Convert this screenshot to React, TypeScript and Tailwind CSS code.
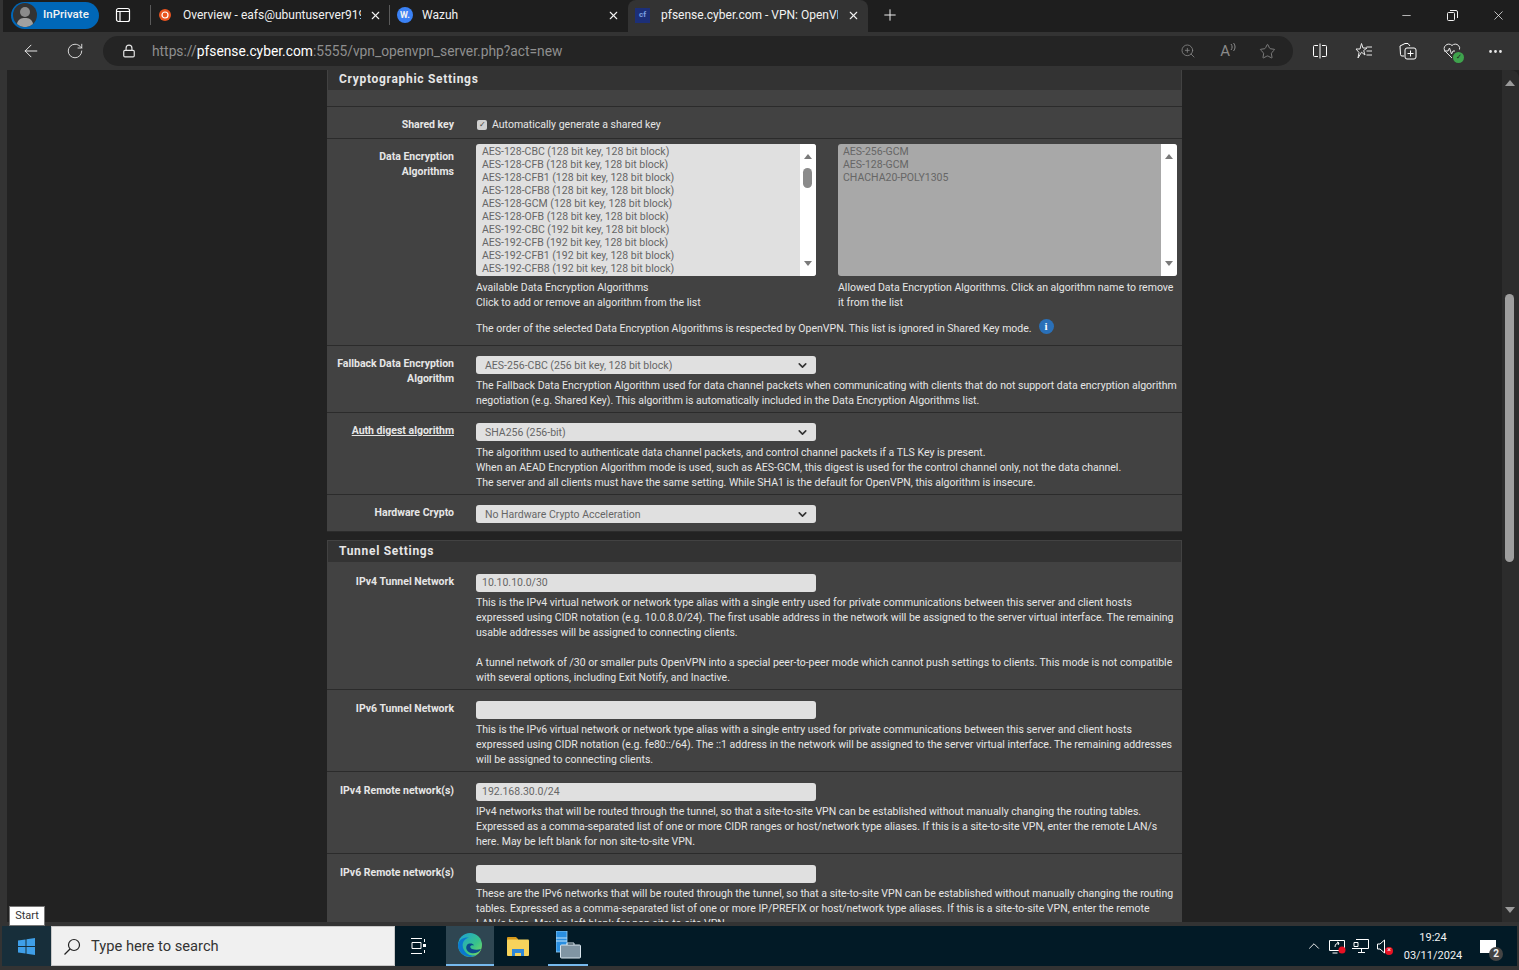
import { ReactNode } from "react";
import { ArrowLeft, ChevronDown, ChevronUp, Lock, Minus, MoreHorizontal, Plus, RotateCw, Star, X, ZoomIn } from "lucide-react";

const available = [
  "AES-128-CBC (128 bit key, 128 bit block)",
  "AES-128-CFB (128 bit key, 128 bit block)",
  "AES-128-CFB1 (128 bit key, 128 bit block)",
  "AES-128-CFB8 (128 bit key, 128 bit block)",
  "AES-128-GCM (128 bit key, 128 bit block)",
  "AES-128-OFB (128 bit key, 128 bit block)",
  "AES-192-CBC (192 bit key, 128 bit block)",
  "AES-192-CFB (192 bit key, 128 bit block)",
  "AES-192-CFB1 (192 bit key, 128 bit block)",
  "AES-192-CFB8 (192 bit key, 128 bit block)",
];

function TitleBar() {
  return (
    <div className="flex h-8 shrink-0 items-center border-l-[3px] border-[#333333] bg-[#1e1e1e] text-xs text-[#f2f2f2]">
      <div className="ml-[8px] -mt-[2px] flex h-[27px] w-[88px] items-center rounded-full bg-[#0067b8] pl-[2px]">
        <svg width="24" height="24" viewBox="0 0 24 24">
          <circle cx="12" cy="12" r="12" fill="#333333" />
          <circle cx="12" cy="9" r="5" fill="#8c8c8c" />
          <path d="M4 21c1-5 4-6 8-6s7 1 8 6a12 12 0 0 1-16 0z" fill="#a0a0a0" />
        </svg>
        <span className="ml-[6px] text-[11.5px] font-medium">InPrivate</span>
      </div>
      <svg width="16" height="16" viewBox="0 0 16 16" className="ml-[16px] -mt-[2px]" fill="none" stroke="white" strokeWidth="1.2">
        <rect x="1.5" y="1.5" width="13" height="13" rx="2" />
        <path d="M1.5 4.5h13M5 4.5v10" />
      </svg>
      <div className="ml-[19px] -mt-[2px] h-5 w-px bg-[#5a5a5a]" />
      <div className="flex h-8 w-[238px] items-center pb-[2px] pl-2">
        <svg width="12" height="12" viewBox="0 0 12 12" className="shrink-0">
          <circle cx="6" cy="6" r="6" fill="#e95420" />
          <circle cx="6" cy="6" r="3" fill="none" stroke="white" strokeWidth="1.2" />
        </svg>
        <span className="ml-[12px] w-[178px] overflow-hidden whitespace-nowrap">Overview - eafs@ubuntuserver919</span>
        <X size={13} className="ml-[8px] shrink-0" />
      </div>
      <div className="-mt-[2px] h-5 w-px bg-[#5a5a5a]" />
      <div className="flex h-8 w-[238px] items-center pb-[2px] pl-[7px]">
        <div className="flex h-4 w-4 items-center justify-center rounded-full bg-[#3b82f6] text-[9px] font-bold">W.</div>
        <span className="ml-[9px] w-[185px]">Wazuh</span>
        <X size={13} />
      </div>
      <div className="flex h-8 w-[240px] items-center rounded-t-lg bg-[#333333] pb-[2px] pl-[7px]">
        <div className="flex h-[15px] w-[15px] items-center justify-center bg-[#1c2f78] text-[8px] font-bold text-[#7aa0e0]">cf</div>
        <span className="ml-[11px] w-[177px] overflow-hidden whitespace-nowrap">pfsense.cyber.com - VPN: OpenVPN</span>
        <X size={13} className="ml-[9px]" />
      </div>
      <Plus size={18} strokeWidth={1.3} className="ml-[13px] -mt-[2px]" />
      <div className="ml-auto -mt-[2px] flex items-center">
        <Minus size={13} strokeWidth={1.3} className="mr-[34px]" />
        <svg width="11" height="11" viewBox="0 0 11 11" fill="none" stroke="#f2f2f2" className="mr-[33px]">
          <rect x="0.5" y="2.5" width="7" height="8" rx="1" />
          <path d="M3 .5h6a1.5 1.5 0 0 1 1.5 1.5v6" />
        </svg>
        <X size={15} strokeWidth={1.2} className="mr-[13px]" />
      </div>
    </div>
  );
}

function AddressBar() {
  return (
    <div className="z-10 flex h-[38px] shrink-0 items-center bg-[#333333] text-[#e8e8e8]">
      <ArrowLeft size={20} strokeWidth={1.2} className="ml-[21px]" />
      <RotateCw size={18} strokeWidth={1.2} className="ml-[25px]" />
      <div className="ml-[19px] flex h-[30px] w-[1190px] items-center rounded-full bg-[#242424]">
        <Lock size={14} className="ml-[19px] text-[#e8e8e8]" />
        <span className="ml-[16px] text-[13.8px] text-[#8f8f8f]">
          https://<span className="text-white">pfsense.cyber.com</span>:5555/vpn_openvpn_server.php?act=new
        </span>
        <div className="ml-auto mr-[17px] flex items-center text-[#8a8a8a]">
          <ZoomIn size={16} strokeWidth={1.2} />
          <span className="ml-[24px] text-[15px] leading-none">A</span>
          <svg width="6" height="10" viewBox="0 0 6 10" fill="none" stroke="#8a8a8a" className="mb-2">
            <path d="M1 2c1.500 2 1.500 4 0 6M3.500 1c2 2.500 2 5.500 0 8" />
          </svg>
          <Star size={17} strokeWidth={1.2} className="ml-[23px]" />
        </div>
      </div>
      <svg width="16" height="16" viewBox="0 0 16 16" className="ml-[19px]" fill="none" stroke="white">
        <path d="M6 2.500H2.500a1 1 0 0 0-1 1v9a1 1 0 0 0 1 1H6M10 2.500h3.500a1 1 0 0 1 1 1v9a1 1 0 0 1-1 1H10M8 .5v15" />
      </svg>
      <svg width="18" height="18" viewBox="0 0 18 18" className="ml-[27px]" fill="none" stroke="#e8e8e8">
        <path d="M6.500 1.500 8 6h4l-3.300 2.500 1.300 4.500-3.500-2.800L3 16l1-5.500L1 7h4z" />
        <path d="M11.500 5H17M11.500 9H17M11.500 13H17" />
      </svg>
      <svg width="18" height="18" viewBox="0 0 18 18" className="ml-[26px]" fill="none" stroke="white">
        <path d="M5 14H3a1.500 1.500 0 0 1-1.500-1.500L1 4l5-2.500h3L11 4" />
        <rect x="6" y="6" width="11" height="11" rx="2" />
        <path d="M11.500 8.500v6M8.500 11.500h6" />
      </svg>
      <div className="relative ml-[26px] h-[18px] w-[18px]">
        <svg width="18" height="18" viewBox="0 0 18 18" fill="none" stroke="#e8e8e8">
          <path d="M9 16 2.500 9.500a4 4 0 0 1 0-6 4.500 4.500 0 0 1 6.500 0 4.500 4.500 0 0 1 6.500 0 4 4 0 0 1 1 4M1 9h4l1.500-3 2 6L10 9h2" />
        </svg>
        <div className="absolute -bottom-[3px] -right-[3px] flex h-[11px] w-[11px] items-center justify-center rounded-full bg-[#3fa34d] text-[7px] leading-none text-[#1e1e1e]">✓</div>
      </div>
      <MoreHorizontal size={17} className="ml-[26px]" />
    </div>
  );
}

function Heading({ children }: { children: ReactNode }) {
  return (
    <div className="flex h-[23px] items-center border border-[#424242] bg-[#333333] pb-[2px] pl-[11px] text-xs font-bold tracking-[0.7px] text-[#e6e6e6]">
      {children}
    </div>
  );
}

function Row({ label, children, underline, className }: { label: ReactNode; children: ReactNode; underline?: boolean; className?: string }) {
  return (
    <div className={`flex border-b border-[#2b2b2b] bg-[#424242] ${className ?? ""}`}>
      <div className="w-[127px] shrink-0 pt-[10px] text-right text-[10.5px] leading-[15px] font-bold text-[#e6e6e6]">
        <span className={underline ? "underline" : ""}>{label}</span>
      </div>
      <div className="ml-[22px] flex-1 pt-[10px] pr-[3px]">{children}</div>
    </div>
  );
}

function Help({ children }: { children: ReactNode }) {
  return <div className="text-[10.5px] leading-[15px] text-[#e6e6e6]">{children}</div>;
}

function Select({ value }: { value: string }) {
  return (
    <div className="flex h-[18px] w-[340px] items-center rounded-[3px] bg-[#e0e0e0] pt-px pr-[7px] pl-[9px] text-[10.5px] text-[#666666]">
      {value}
      <ChevronDown size={13} strokeWidth={3} className="ml-auto text-[#333333]" />
    </div>
  );
}

function TextBox({ value }: { value?: string }) {
  return (
    <div className="flex h-[18px] w-[340px] items-center rounded-[3px] bg-[#e0e0e0] pl-[6px] text-[10.5px] text-[#666666]">{value}</div>
  );
}

function ListBox({ items, width, bg, thumb }: { items: string[]; width: string; bg: string; thumb?: boolean }) {
  return (
    <div className={`flex h-[132px] overflow-hidden rounded-[3px] ${width} ${bg} text-[10.5px] leading-[13px] text-[#666666]`}>
      <div className={`flex-1 pt-px ${thumb ? "pl-[6px]" : "pl-[5px]"}`}>
        {items.map((item) => (
          <div key={item}>{item}</div>
        ))}
      </div>
      <div className="relative w-4 shrink-0 bg-white">
        <div className="absolute left-1 top-[10px] h-0 w-0 border-x-4 border-b-[5px] border-x-transparent border-b-[#7a7a7a]" />
        {thumb && <div className="absolute left-[3px] top-6 h-5 w-[9px] rounded-full bg-[#8a8a8a]" />}
        <div className="absolute bottom-[10px] left-1 h-0 w-0 border-x-4 border-t-[5px] border-x-transparent border-t-[#7a7a7a]" />
      </div>
    </div>
  );
}

function Form() {
  return (
    <div className="-mt-[2px] ml-[320px] w-[855px]">
      <Heading>Cryptographic Settings</Heading>
      <div className="h-[16px] border-b border-[#2b2b2b] bg-[#424242]" />
      <Row label="Shared key" className="h-[32px]">
        <div className="flex items-center text-[10.5px] leading-[15px] text-[#e6e6e6]">
          <div className="ml-px flex h-[10px] w-[10px] items-center justify-center rounded-[2px] bg-[#d0d0d0] text-[8px] leading-none text-[#444444]">✓</div>
          <span className="ml-[5px]">Automatically generate a shared key</span>
        </div>
      </Row>
      <Row label="Data Encryption Algorithms" className="h-[207px] [&>div:last-child]:pt-[5px]">
        <div className="flex">
          <div className="w-[362px]">
            <ListBox items={available} width="w-[340px]" bg="bg-[#e0e0e0]" thumb />
            <div className="mt-1">
              <Help>Available Data Encryption Algorithms<br />Click to add or remove an algorithm from the list</Help>
            </div>
          </div>
          <div className="w-[339px]">
            <ListBox items={["AES-256-GCM", "AES-128-GCM", "CHACHA20-POLY1305"]} width="w-[339px]" bg="bg-[#a8a8a8]" />
            <div className="mt-1">
              <Help>Allowed Data Encryption Algorithms. Click an algorithm name to remove it from the list</Help>
            </div>
          </div>
        </div>
        <div className="mt-[11px] flex items-center">
          <Help>The order of the selected Data Encryption Algorithms is respected by OpenVPN. This list is ignored in Shared Key mode.</Help>
          <div className="-mt-[4px] ml-[7px] flex h-[15px] w-[15px] items-center justify-center rounded-full bg-[#2a70b8] font-['Liberation_Serif',serif] text-[11px] font-bold text-white">i</div>
        </div>
      </Row>
      <Row label="Fallback Data Encryption Algorithm" className="h-[67px]">
        <Select value="AES-256-CBC (256 bit key, 128 bit block)" />
        <div className="mt-[4px]">
          <Help>The Fallback Data Encryption Algorithm used for data channel packets when communicating with clients that do not support data encryption algorithm negotiation (e.g. Shared Key). This algorithm is automatically included in the Data Encryption Algorithms list.</Help>
        </div>
      </Row>
      <Row label="Auth digest algorithm" underline className="h-[82px]">
        <Select value="SHA256 (256-bit)" />
        <div className="mt-[4px]">
          <Help>
            The algorithm used to authenticate data channel packets, and control channel packets if a TLS Key is present.<br />
            When an AEAD Encryption Algorithm mode is used, such as AES-GCM, this digest is used for the control channel only, not the data channel.<br />
            The server and all clients must have the same setting. While SHA1 is the default for OpenVPN, this algorithm is insecure.
          </Help>
        </div>
      </Row>
      <Row label="Hardware Crypto" className="h-[37px]">
        <Select value="No Hardware Crypto Acceleration" />
      </Row>
      <div className="h-2" />
      <Heading>Tunnel Settings</Heading>
      <Row label="IPv4 Tunnel Network" className="h-[127px] [&>div]:pt-[11px]">
        <TextBox value="10.10.10.0/30" />
        <div className="mt-[3px]">
          <Help>
            This is the IPv4 virtual network or network type alias with a single entry used for private communications between this server and client hosts expressed using CIDR notation (e.g. 10.0.8.0/24). The first usable address in the network will be assigned to the server virtual interface. The remaining usable addresses will be assigned to connecting clients.
            <br /><br />
            A tunnel network of /30 or smaller puts OpenVPN into a special peer-to-peer mode which cannot push settings to clients. This mode is not compatible with several options, including Exit Notify, and Inactive.
          </Help>
        </div>
      </Row>
      <Row label="IPv6 Tunnel Network" className="h-[82px] [&>div]:pt-[11px]">
        <TextBox />
        <div className="mt-[3px]">
          <Help>This is the IPv6 virtual network or network type alias with a single entry used for private communications between this server and client hosts expressed using CIDR notation (e.g. fe80::/64). The ::1 address in the network will be assigned to the server virtual interface. The remaining addresses will be assigned to connecting clients.</Help>
        </div>
      </Row>
      <Row label="IPv4 Remote network(s)" className="h-[82px] [&>div]:pt-[11px]">
        <TextBox value="192.168.30.0/24" />
        <div className="mt-[3px]">
          <Help>IPv4 networks that will be routed through the tunnel, so that a site-to-site VPN can be established without manually changing the routing tables. Expressed as a comma-separated list of one or more CIDR ranges or host/network type aliases. If this is a site-to-site VPN, enter the remote LAN/s here. May be left blank for non site-to-site VPN.</Help>
        </div>
      </Row>
      <Row label="IPv6 Remote network(s)" className="h-[82px] [&>div]:pt-[11px]">
        <TextBox />
        <div className="mt-[3px]">
          <Help>These are the IPv6 networks that will be routed through the tunnel, so that a site-to-site VPN can be established without manually changing the routing tables. Expressed as a comma-separated list of one or more IP/PREFIX or host/network type aliases. If this is a site-to-site VPN, enter the remote LAN/s here. May be left blank for non site-to-site VPN.</Help>
        </div>
      </Row>
    </div>
  );
}

function Taskbar() {
  return (
    <div className="relative mx-[2px] my-1 flex h-10 shrink-0 items-stretch bg-[#021a26] text-[#f2f2f2]">
      <div className="absolute -top-5 left-[7px] flex h-5 w-9 items-center justify-center border border-[#777777] bg-white text-[11px] text-[#333333]">Start</div>
      <div className="flex w-[49px] items-center justify-center bg-[#172e3a]">
        <svg width="17" height="17" viewBox="0 0 17 17" fill="#3f9fe8">
          <path d="M0 2.500 7.500 1.500v6.500H0zM8.500 1.300 17 0v8H8.500zM0 9h7.500v6.500L0 14.500zM8.500 9H17v8l-8.500-1.300z" />
        </svg>
      </div>
      <div className="flex w-[344px] items-center border border-[#c8c8c8] bg-[#f0f0f0] pt-px text-[14.7px] text-[#333333]">
        <svg width="18" height="18" viewBox="0 0 18 18" fill="none" stroke="#222222" strokeWidth="1.2" className="ml-[11px]">
          <circle cx="11" cy="7" r="5.500" />
          <path d="M7 11 1.500 16.500" />
        </svg>
        <span className="ml-[10px]">Type here to search</span>
      </div>
      <div className="flex w-[48px] items-center justify-center">
        <svg width="16" height="16" viewBox="0 0 16 16" fill="none" stroke="white">
          <path d="M0 .5h11M0 15.500h11M1 4.500h9v6H1zM13.500 1v3M13.500 12v3" />
          <rect x="12" y="6" width="3" height="3" fill="white" stroke="none" />
        </svg>
      </div>
      <div className="ml-[3px] flex w-[48px] items-center justify-center border-b-2 border-[#76b9ed] bg-[#2f4652]">
        <svg width="24" height="24" viewBox="0 0 24 24">
          <defs>
            <linearGradient id="edgeTop" x1="0" y1="0" x2="1" y2="1">
              <stop offset="0" stopColor="#1ba0d8" />
              <stop offset="0.6" stopColor="#39c38a" />
              <stop offset="1" stopColor="#8adf5a" />
            </linearGradient>
          </defs>
          <circle cx="12" cy="12" r="12" fill="url(#edgeTop)" />
          <path d="M0 12C1 6 6 4 11 4.500 5 6 3 12 6 17c2 4 7 7 13 4.500A12 12 0 0 1 0 12z" fill="#0b78cf" />
          <path d="M23 16c-2 4-7 5-10 4-4-1-6-5-4-8 1.500-2 6-2 7 .5-4-1-5 2-2 3.500 3 1 6 1 9 0z" fill="#0c4a8c" />
        </svg>
      </div>
      <div className="flex w-[48px] items-center justify-center">
        <svg width="22" height="19" viewBox="0 0 22 19">
          <path d="M0 1a1 1 0 0 1 1-1h8l2 2v3H0z" fill="#d89a1c" />
          <rect y="2.500" width="22" height="16.500" rx="1" fill="#f7d35c" />
          <path d="M5 19v-7h12v7h-3v-3H8v3z" fill="#2f88d8" />
        </svg>
      </div>
      <div className="ml-[6px] flex w-[40px] items-center justify-center border-b-2 border-[#76b9ed]">
        <svg width="25" height="28" viewBox="0 0 25 28">
          <rect x="0" y="0" width="11" height="21" fill="#2a8fe0" stroke="#9ad0f5" strokeWidth="0.8" />
          <path d="M0 7h11M0 10h11" stroke="#bfe2fa" />
          <rect x="4.500" y="14" width="20" height="13" rx="1" fill="#8095a3" stroke="#d8e4ec" />
          <path d="M11 14v-2h7v2" fill="none" stroke="#d8e4ec" />
        </svg>
      </div>
      <div className="ml-auto flex items-center">
        <ChevronUp size={18} strokeWidth={1.3} />
        <svg width="18" height="16" viewBox="0 0 18 16" fill="none" stroke="white" className="ml-[5px]">
          <path d="M1.500 2.500h15v10h-15zM4.500 15h5M7 9c0-3 2-4 4-4M9 4l2 1-1 2" />
          <circle cx="14" cy="12" r="3.500" fill="#e81123" stroke="none" />
        </svg>
        <svg width="18" height="15" viewBox="0 0 18 15" fill="none" stroke="white" className="ml-[5px]">
          <path d="M5 .5h12.500v9H1M3 3.500h4v4H3zM7 13.500h7M10.500 9.500v4" />
        </svg>
        <div className="relative ml-[8px] h-[15px] w-[16px]">
          <svg width="10" height="15" viewBox="0 0 10 15" fill="none" stroke="white">
            <path d="M.5 5v5h2.500l4.500 4V1L3 5z" />
          </svg>
          <div className="absolute -bottom-[1px] right-0 flex h-2 w-2 items-center justify-center rounded-sm bg-[#e81123] text-[7px] leading-none">×</div>
        </div>
        <div className="ml-[5px] mt-px w-[70px] text-center text-[11px] leading-[18px]">
          19:24<br />03/11/2024
        </div>
        <div className="relative ml-[12px] mr-[21px] h-[13px] w-[16px] bg-white">
          <div className="absolute -bottom-2 -right-[7px] flex h-[14px] w-[14px] items-center justify-center rounded-full bg-[#444444] text-[10px] font-bold">2</div>
        </div>
      </div>
    </div>
  );
}

export default function App() {
  return (
    <div className="flex h-[970px] w-[1519px] flex-col overflow-hidden bg-[#333333] font-['Roboto',sans-serif]">
      <TitleBar />
      <AddressBar />
      <div className="ml-[7px] flex min-h-0 flex-1 bg-[#222222]">
        <div className="min-w-0 flex-1 overflow-hidden">
          <Form />
        </div>
        <div className="relative w-[17px] shrink-0 rounded-tr-lg bg-[#2c2c2c]">
          <div className="absolute left-[3px] top-[10px] h-0 w-0 border-x-[5px] border-b-[6px] border-x-transparent border-b-[#9a9a9a]" />
          <div className="absolute left-[3px] top-[224px] h-[268px] w-[9px] rounded-full bg-[#9e9e9e]" />
          <div className="absolute bottom-[9px] left-[3px] h-0 w-0 border-x-[5px] border-t-[6px] border-x-transparent border-t-[#9a9a9a]" />
        </div>
      </div>
      <Taskbar />
    </div>
  );
}
